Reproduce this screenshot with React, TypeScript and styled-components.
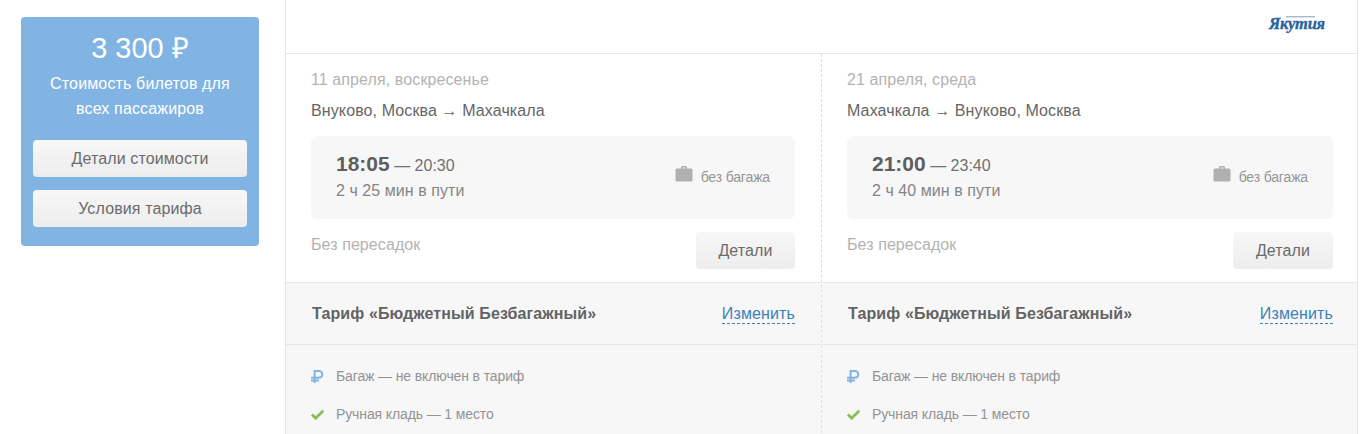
import React from "react";
import styled, { createGlobalStyle } from "styled-components";

const Global = createGlobalStyle`
  html, body { margin: 0; padding: 0; background: #fff; height: 434px; overflow: hidden; }
  body { font-family: "Liberation Sans", Arial, sans-serif; color: #666; }
`;

const Page = styled.div`
  display: flex;
  align-items: flex-start;
  width: 1367px;
  height: 434px;
  overflow: hidden;
`;

const Aside = styled.aside`
  width: 285px;
  flex: none;
  padding: 17px 0 0 21px;
  box-sizing: border-box;
`;

const PriceCard = styled.div`
  width: 238px;
  height: 229px;
  box-sizing: border-box;
  background: #82b4e3;
  border-radius: 4px;
  padding: 14px 12px 0;
  color: #fff;
  text-align: center;
`;

const Price = styled.div`
  font-size: 29px;
  line-height: 34px;
`;

const PriceNote = styled.div`
  font-size: 16px;
  line-height: 25px;
  letter-spacing: 0.15px;
  margin-top: 6px;
  margin-bottom: 19px;
  white-space: nowrap;
`;

const Button = styled.div<{ $w?: number }>`
  display: flex;
  align-items: center;
  justify-content: center;
  height: 37px;
  width: ${(p) => (p.$w ? `${p.$w}px` : "100%")};
  box-sizing: border-box;
  border-radius: 4px;
  background: linear-gradient(#f7f7f7, #ededed);
  color: #6b6b6b;
  font-size: 16px;
  letter-spacing: 0.12px;
`;

const ButtonStack = styled.div`
  display: flex;
  flex-direction: column;
  gap: 13px;
  width: 214px;
  margin: 0 auto;
`;

const Panel = styled.main`
  width: 1073px;
  height: 434px;
  flex: none;
  box-sizing: border-box;
  border-left: 1px solid #e6e6e6;
  border-right: 1px solid #e6e6e6;
  display: flex;
  flex-direction: column;
`;

const PanelHead = styled.header`
  height: 54px;
  flex: none;
  box-sizing: border-box;
  border-bottom: 1px solid #e6e6e6;
  display: flex;
  justify-content: flex-end;
  padding: 13px 31px 0 0;
`;

const LogoMark = styled.svg`
  width: 58px;
  height: 20px;
  display: block;
`;

const Columns = styled.div`
  display: grid;
  grid-template-columns: 536px 535px;
  flex: 1;
`;

const Column = styled.section<{ $dashed?: boolean }>`
  display: flex;
  flex-direction: column;
  min-width: 0;
  ${(p) => (p.$dashed ? "border-right: 1px dashed #dcdcdc;" : "")}
`;

const Flight = styled.div<{ $right: number }>`
  height: 228px;
  flex: none;
  box-sizing: border-box;
  padding: 16px ${(p) => p.$right}px 0 25px;
`;

const DateLine = styled.div`
  color: #b3b3b3;
  font-size: 16px;
  line-height: 20px;
  letter-spacing: 0.1px;
`;

const Route = styled.div`
  color: #666;
  font-size: 16px;
  line-height: 20px;
  margin-top: 11px;
  letter-spacing: 0.11px;
`;

const TimeBox = styled.div`
  height: 83px;
  margin-top: 15px;
  box-sizing: border-box;
  background: #f7f7f7;
  border-radius: 6px;
  padding: 0 25px;
  display: flex;
  align-items: center;
  justify-content: space-between;
`;

const Times = styled.div`
  display: flex;
  flex-direction: column;
  margin-top: -2px;
`;

const TimeRow = styled.div`
  font-size: 16px;
  line-height: 26px;
  color: #707070;
`;

const Depart = styled.b`
  font-size: 21px;
  color: #5e5e5e;
`;

const Duration = styled.div`
  font-size: 16px;
  line-height: 24px;
  color: #858585;
  letter-spacing: 0.06px;
`;

const Baggage = styled.div`
  display: flex;
  align-items: center;
  gap: 8px;
  font-size: 14px;
  letter-spacing: -0.15px;
  color: #959595;
  margin-top: -2px;
`;

const BagIcon = styled.svg`
  width: 18px;
  height: 17px;
  margin-top: -6px;
  color: #b0b0b0;
`;

const FlightFoot = styled.div`
  display: flex;
  justify-content: space-between;
  margin-top: 13px;
`;

const Stops = styled.div`
  color: #b3b3b3;
  font-size: 16px;
  line-height: 26px;
  letter-spacing: 0.08px;
`;

const Tariff = styled.div<{ $right: number }>`
  height: 63px;
  flex: none;
  box-sizing: border-box;
  background: #f7f7f7;
  border-top: 1px solid #e6e6e6;
  border-bottom: 1px solid #e6e6e6;
  padding: 0 ${(p) => p.$right}px 0 26px;
  display: flex;
  align-items: center;
  justify-content: space-between;
`;

const TariffName = styled.b`
  font-size: 16px;
  letter-spacing: 0.1px;
  color: #636363;
`;

const ChangeLink = styled.span`
  font-size: 16px;
  letter-spacing: 0.12px;
  color: #3b82b8;
  border-bottom: 1px dashed #3b82b8;
  line-height: 19px;
`;

const Features = styled.ul`
  flex: 1;
  margin: 0;
  list-style: none;
  background: #f7f7f7;
  padding: 22px 0 0 25px;
`;

const Feature = styled.li`
  display: flex;
  align-items: center;
  height: 18px;
  margin-bottom: 20px;
  font-size: 14px;
  letter-spacing: -0.12px;
  color: #939393;
`;

const FeatureIcon = styled.svg`
  width: 13px;
  height: 13px;
  flex: none;
  margin-right: 12px;
`;

const AirlineLogo = () => (
  <LogoMark viewBox="0 0 58 20">
    <rect x="18" y="3" width="29" height="1.4" fill="#a9b8cc" />
    <text
      x="1"
      y="16"
      fontFamily="'Liberation Serif', serif"
      fontStyle="italic"
      fontWeight="700"
      fontSize="16.5"
      textLength="56"
      fill="#2a62a0"
      stroke="#2a62a0"
      strokeWidth="0.35"
    >
      Якутия
    </text>
  </LogoMark>
);

const Suitcase = () => (
  <BagIcon viewBox="0 0 18 17" fill="currentColor">
    <path d="M6 4V2.4C6 1.6 6.6 1 7.4 1h3.2c.8 0 1.4.6 1.4 1.4V4h-1.6V2.6H7.6V4z" />
    <rect x="0.5" y="3.5" width="17" height="13" rx="1.5" />
  </BagIcon>
);

const RubleIcon = () => (
  <FeatureIcon viewBox="0 0 13 13" fill="none" stroke="#82b4e3" strokeWidth="2">
    <path d="M3.6 13V1.1h4.4a3.3 3.3 0 0 1 0 6.6H0M0 10.4h8" />
  </FeatureIcon>
);

const CheckIcon = () => (
  <FeatureIcon viewBox="0 0 13 13" fill="none" stroke="#8abd55" strokeWidth="2.8">
    <path d="M1 6.6l3.6 3.6L12.2 2.8" />
  </FeatureIcon>
);

type Leg = {
  date: string;
  route: string;
  dep: string;
  arr: string;
  dur: string;
  boxRight: number;
  detailsWidth: number;
  dashed?: boolean;
};

const legs: Leg[] = [
  { date: "11 апреля, воскресенье", route: "Внуково, Москва → Махачкала", dep: "18:05", arr: "20:30", dur: "2 ч 25 мин в пути", boxRight: 26, detailsWidth: 99, dashed: true },
  { date: "21 апреля, среда", route: "Махачкала → Внуково, Москва", dep: "21:00", arr: "23:40", dur: "2 ч 40 мин в пути", boxRight: 24, detailsWidth: 100 },
];

export default function App() {
  return (
    <Page>
      <Global />
      <Aside>
        <PriceCard>
          <Price>3 300 ₽</Price>
          <PriceNote>
            Стоимость билетов для
            <br />
            всех пассажиров
          </PriceNote>
          <ButtonStack>
            <Button>Детали стоимости</Button>
            <Button>Условия тарифа</Button>
          </ButtonStack>
        </PriceCard>
      </Aside>
      <Panel>
        <PanelHead>
          <AirlineLogo />
        </PanelHead>
        <Columns>
          {legs.map((l) => (
            <Column key={l.date} $dashed={l.dashed}>
              <Flight $right={l.boxRight}>
                <DateLine>{l.date}</DateLine>
                <Route>{l.route}</Route>
                <TimeBox>
                  <Times>
                    <TimeRow>
                      <Depart>{l.dep}</Depart> — {l.arr}
                    </TimeRow>
                    <Duration>{l.dur}</Duration>
                  </Times>
                  <Baggage>
                    <Suitcase />
                    без багажа
                  </Baggage>
                </TimeBox>
                <FlightFoot>
                  <Stops>Без пересадок</Stops>
                  <Button $w={l.detailsWidth}>Детали</Button>
                </FlightFoot>
              </Flight>
              <Tariff $right={l.boxRight}>
                <TariffName>Тариф «Бюджетный Безбагажный»</TariffName>
                <ChangeLink>Изменить</ChangeLink>
              </Tariff>
              <Features>
                <Feature>
                  <RubleIcon />
                  Багаж — не включен в тариф
                </Feature>
                <Feature>
                  <CheckIcon />
                  Ручная кладь — 1 место
                </Feature>
              </Features>
            </Column>
          ))}
        </Columns>
      </Panel>
    </Page>
  );
}
